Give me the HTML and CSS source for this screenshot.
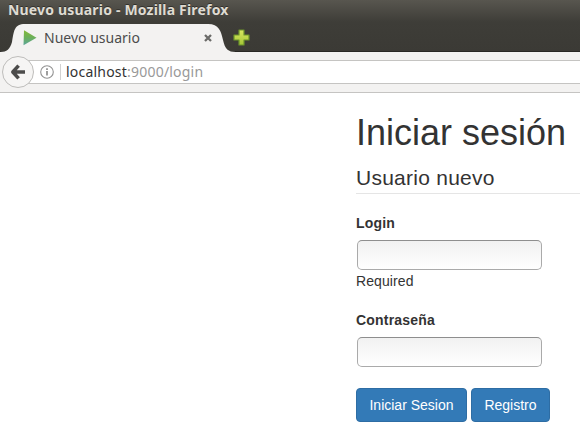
FILE: index.html
```html
<!DOCTYPE html>
<html lang="es">
<head>
<meta charset="utf-8">
<title>Nuevo usuario</title>
<link rel="stylesheet" href="styles.css">
</head>
<body>
<header class="chrome">
  <div class="titlebar"><span class="window-title">Nuevo usuario - Mozilla Firefox</span></div>
  <div class="tabstrip">
    <div class="tab">
      <svg class="tab-shape" width="236" height="30" viewBox="0 0 236 30"><path d="M0 30V28C7 28 10 25 12 18C14 7 14 0 25 0H208C219 0 221 7 223 16C225 25 228 28 236 28V30Z" fill="#f3f2f1"/></svg>
      <svg class="favicon" width="14" height="16" viewBox="0 0 14 16"><defs><linearGradient id="play" x1="0" y1="0" x2="0" y2="1"><stop offset="0" stop-color="#83b936"/><stop offset=".45" stop-color="#6db057"/><stop offset="1" stop-color="#5ba59a"/></linearGradient></defs><path d="M1 0.3L13.5 7.7L.5 15.3Z" fill="url(#play)"/></svg>
      <span class="tab-title">Nuevo usuario</span>
      <svg class="close" width="8" height="8" viewBox="0 0 8 8"><path d="M1 1L7 7M7 1L1 7" stroke="#6b6b69" stroke-width="2.3"/></svg>
    </div>
    <svg class="new-tab" width="17" height="17" viewBox="0 0 17 17"><defs><linearGradient id="plus" x1="0" y1="0" x2="0" y2="1"><stop offset="0" stop-color="#d9e860"/><stop offset="1" stop-color="#a3c536"/></linearGradient></defs><path d="M6 1H11V6H16V11H11V16H6V11H1V6H6Z" fill="url(#plus)" stroke="#6c942b" stroke-width="1.2" stroke-linejoin="round"/></svg>
  </div>
  <div class="navbar">
    <div class="back"><svg width="16" height="16" viewBox="0 0 16 16"><path d="M8.6 1.6L2.8 8L8.6 14.4M3 8H15" fill="none" stroke="#4c4c4b" stroke-width="3.5" stroke-linejoin="round"/></svg></div>
    <div class="urlbar">
      <svg class="info" width="14" height="14" viewBox="0 0 14 14"><circle cx="7" cy="7" r="6.3" fill="none" stroke="#929292" stroke-width="1.1"/><path d="M7 6V10.5M7 3.2V5" stroke="#858585" stroke-width="1.6"/></svg>
      <span class="url"><span class="host">localhost</span>:9000/login</span>
    </div>
  </div>
</header>
<main class="page">
  <h1>Iniciar sesión</h1>
  <form>
    <h2>Usuario nuevo</h2>
    <div class="field login">
      <label for="login">Login</label>
      <input id="login" type="text">
      <span class="hint">Required</span>
    </div>
    <div class="field">
      <label for="password">Contraseña</label>
      <input id="password" type="password">
    </div>
    <div class="actions">
      <button class="submit" type="button">Iniciar Sesion</button>
      <button class="register" type="button">Registro</button>
    </div>
  </form>
</main>
</body>
</html>
```
FILE: styles.css
```css
* { box-sizing: border-box; }
body {
  margin: 0;
  height: 446px;
  overflow: hidden;
  background: #fff;
  color: #333;
  font: 14px/20px "Liberation Sans", Arial, sans-serif;
}
svg { display: block; flex: none; }
.chrome {
  height: 93px;
  background: linear-gradient(#58564f 0, #3e3d38 22px, #3b3a35 51px);
  font-family: "Noto Sans", sans-serif;
  white-space: nowrap;
}
.titlebar { height: 20px; padding-left: 8px; }
.window-title {
  display: block;
  color: #dfdbd2;
  font-size: 14px;
  font-weight: 700;
  letter-spacing: 0.18px;
  line-height: 20px;
  text-shadow: 0 -1px #32312d;
}
.tabstrip {
  display: flex;
  height: 32px;
  padding-top: 4px;
  border-bottom: 1px solid #292824;
}
.tab {
  position: relative;
  display: flex;
  width: 231px;
  height: 28px;
  padding-left: 23px;
}
.tab-shape { position: absolute; left: 0; top: 0; }
.favicon { position: relative; margin-top: 6px; }
.tab-title {
  position: relative;
  width: 160px;
  padding-left: 7px;
  color: #4c4c4c;
  font-size: 14px;
  line-height: 28px;
}
.close { position: relative; margin: 10px 0 0 7px; }
.new-tab { margin: 5px 0 0 2px; }
.navbar {
  position: relative;
  display: flex;
  height: 41px;
  padding: 8px 0 0 2px;
  background: #f3f2f1;
  border-bottom: 1px solid #c5c4c2;
}
.back {
  position: relative;
  z-index: 1;
  display: flex;
  flex: none;
  align-items: center;
  justify-content: center;
  width: 32px;
  height: 32px;
  margin-top: -4px;
  border: 1px solid #bebdbb;
  border-radius: 50%;
  background: #f6f5f4;
}
.urlbar {
  display: flex;
  flex: 1;
  align-items: center;
  height: 24px;
  margin-left: -6px;
  padding-left: 12px;
  border: solid #c5c4c2;
  border-width: 1px 0;
  background: #fff;
}
.url {
  margin-left: 6px;
  padding-left: 5px;
  border-left: 1px solid #d2d2d2;
  color: #999;
  font-size: 14px;
  letter-spacing: 0.21px;
  line-height: 16px;
}
.host { color: #333; }
.page { padding: 20px 0 0 356px; }
h1 { margin: 0; font-size: 36px; font-weight: 400; line-height: 40px; white-space: nowrap; }
h2 {
  height: 31px;
  margin: 10px 0 19px;
  border-bottom: 1px solid #e5e5e5;
  font-size: 21px;
  font-weight: 400;
  letter-spacing: 0.25px;
  line-height: 30px;
}
.field { display: flex; flex-direction: column; align-items: flex-start; }
.login { height: 97px; }
label { margin-bottom: 7px; font-weight: 700; letter-spacing: 0.2px; line-height: 20px; }
input {
  width: 185px;
  height: 30px;
  margin-left: 1px;
  padding: 4px;
  border: 1px solid #aaa;
  border-top-color: #8e8e8e;
  border-radius: 5px;
  background: linear-gradient(#f1f1f1, #fff);
}
.hint { letter-spacing: 0.1px; line-height: 22px; }
.actions { display: flex; gap: 4px; margin-top: 21px; }
button {
  height: 34px;
  padding: 0;
  border: 1px solid #2e6da4;
  border-radius: 4px;
  background: #337ab7;
  color: #fff;
  font: 14px/20px "Liberation Sans", Arial, sans-serif;
}
.submit { width: 111px; }
.register { width: 79px; }
```
